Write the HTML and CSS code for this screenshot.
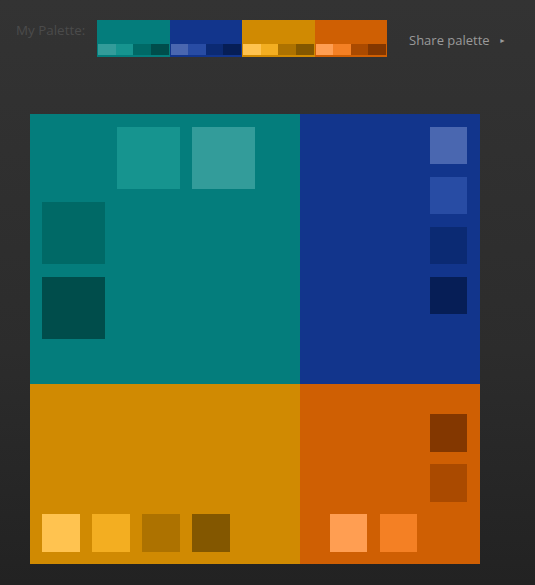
FILE: index.html
```html
<!DOCTYPE html>
<html>
<head>
<meta charset="utf-8">
<link rel="stylesheet" href="styles.css">
</head>
<body>
<header class="bar">
  <span class="label">My Palette:</span>
  <div class="strip">
    <div class="block teal">
      <div class="block-main"></div>
      <div class="block-subs"><i class="t1"></i><i class="t2"></i><i class="t3"></i><i class="t4"></i></div>
    </div>
    <div class="block blue">
      <div class="block-main"></div>
      <div class="block-subs"><i class="b1"></i><i class="b2"></i><i class="b3"></i><i class="b4"></i></div>
    </div>
    <div class="block yellow">
      <div class="block-main"></div>
      <div class="block-subs"><i class="y1"></i><i class="y2"></i><i class="y3"></i><i class="y4"></i></div>
    </div>
    <div class="block orange">
      <div class="block-main"></div>
      <div class="block-subs"><i class="o1"></i><i class="o2"></i><i class="o3"></i><i class="o4"></i></div>
    </div>
  </div>
  <a class="share">Share palette <span class="arrow">&#9658;</span></a>
</header>
<main class="board">
  <section class="quad q-teal">
    <div class="sq t2 tc2"></div>
    <div class="sq t1 tc3"></div>
    <div class="sq t3 tr2"></div>
    <div class="sq t4 tr3"></div>
  </section>
  <section class="quad q-blue">
    <div class="sq b1"></div>
    <div class="sq b2"></div>
    <div class="sq b3"></div>
    <div class="sq b4"></div>
  </section>
  <section class="quad q-yellow">
    <div class="sq y1"></div>
    <div class="sq y2"></div>
    <div class="sq y3"></div>
    <div class="sq y4"></div>
  </section>
  <section class="quad q-orange">
    <div class="sq o4 oa"></div>
    <div class="sq o3 ob"></div>
    <div class="sq o1 oc"></div>
    <div class="sq o2 od"></div>
  </section>
</main>
</body>
</html>
```
FILE: styles.css
```css
html, body {
  margin: 0;
  padding: 0;
}
body {
  width: 535px;
  height: 585px;
  background: linear-gradient(to bottom, #333333 0%, #2c2c2c 60%, #222222 100%);
  font-family: "Open Sans", "Noto Sans", sans-serif;
  overflow: hidden;
}
.bar {
  display: flex;
  align-items: flex-start;
  padding: 20px 0 0 16px;
  height: 37px;
}
.label {
  color: #4b4b4b;
  font-size: 13.4px;
  line-height: 18px;
  margin-top: 1px;
  width: 81px;
  white-space: nowrap;
}
.strip {
  display: flex;
  width: 290px;
  height: 37px;
}
.block {
  flex: 1;
  display: flex;
  flex-direction: column;
  padding: 1px 1px 2px 1px;
  box-sizing: border-box;
}
.block-main {
  height: 23px;
}
.block-subs {
  display: flex;
  height: 11px;
}
.block-subs i {
  flex: 1;
}
.teal { background: #047d7c; }
.blue { background: #12358c; }
.yellow { background: #d08a02; }
.orange { background: #cf5f03; }

.t1 { background: #339c9a; }
.t2 { background: #16948f; }
.t3 { background: #006966; }
.t4 { background: #004d4b; }
.b1 { background: #4a67b0; }
.b2 { background: #284ca4; }
.b3 { background: #0b2a73; }
.b4 { background: #061e56; }
.y1 { background: #ffc350; }
.y2 { background: #f3ae21; }
.y3 { background: #ad7200; }
.y4 { background: #835700; }
.o1 { background: #ff9e52; }
.o2 { background: #f48024; }
.o3 { background: #aa4a00; }
.o4 { background: #833700; }

.share {
  margin-left: 22px;
  margin-top: 10px;
  color: #9a9a9a;
  font-size: 13px;
  line-height: 20px;
  white-space: nowrap;
}
.arrow {
  font-size: 7px;
  vertical-align: 2px;
  margin-left: 6px;
  color: #9a9a9a;
}

.board {
  display: grid;
  grid-template-columns: 270px 180px;
  grid-template-rows: 270px 180px;
  margin: 57px 0 0 30px;
  width: 450px;
}
.quad {
  display: grid;
  box-sizing: border-box;
}
.q-teal {
  background: #047d7c;
  padding: 13px 0 0 12px;
  grid-template-columns: repeat(3, 63px);
  grid-template-rows: repeat(3, 62px);
  column-gap: 12px;
  row-gap: 13px;
  align-content: start;
}
.tc2 { grid-row: 1; grid-column: 2; }
.tc3 { grid-row: 1; grid-column: 3; }
.tr2 { grid-row: 2; grid-column: 1; }
.tr3 { grid-row: 3; grid-column: 1; }

.q-blue {
  background: #12358c;
  padding: 13px 13px 0 0;
  grid-template-columns: 37px;
  grid-auto-rows: 37px;
  row-gap: 13px;
  justify-content: end;
  align-content: start;
}
.q-yellow {
  background: #d08a02;
  padding: 0 0 12px 12px;
  grid-template-columns: repeat(4, 38px);
  grid-template-rows: 38px;
  column-gap: 12px;
  align-content: end;
}
.q-orange {
  background: #cf5f03;
  padding: 30px 0 0 30px;
  grid-template-columns: repeat(3, 37px);
  grid-template-rows: repeat(3, 38px);
  column-gap: 13px;
  row-gap: 12px;
  align-content: start;
}
.oa { grid-row: 1; grid-column: 3; }
.ob { grid-row: 2; grid-column: 3; }
.oc { grid-row: 3; grid-column: 1; }
.od { grid-row: 3; grid-column: 2; }
```
